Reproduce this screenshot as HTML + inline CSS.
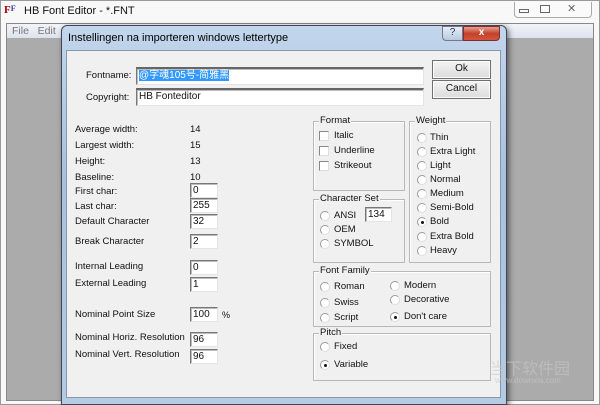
<!DOCTYPE html>
<html><head><meta charset="utf-8"><style>
*{margin:0;padding:0;box-sizing:border-box}
body{width:600px;height:405px;position:relative;overflow:hidden;background:#fff;font-family:"Liberation Sans","Noto Sans CJK SC",sans-serif;font-size:9.5px;color:#111}
.a{position:absolute;white-space:nowrap}
.inp{position:absolute;background:#fff;border-top:1px solid #777;border-left:1px solid #777;border-right:1px solid #e4e4e4;border-bottom:1px solid #e4e4e4;box-shadow:inset 1px 1px 0 #bbb;padding:1px 2px;font-size:10px;line-height:12px}
.grp{position:absolute;border:1px solid #b8b8b8;box-shadow:1px 1px 0 #fff inset}
.grp .t{position:absolute;top:-7px;left:5px;background:#f0f0f0;padding:0 1px}
.rb{position:absolute;width:10px;height:10px;border-radius:50%;background:#fff;border:1px solid #999;border-right-color:#ddd;border-bottom-color:#ddd}
.rb.on::after{content:"";position:absolute;left:2.5px;top:2.5px;width:3px;height:3px;border-radius:50%;background:#111}
.cb{position:absolute;width:10px;height:10px;background:#fff;border:1px solid #888;border-right-color:#ddd;border-bottom-color:#ddd}
.btn{position:absolute;border:1px solid #707070;background:linear-gradient(#f4f4f4,#dcdcdc);box-shadow:inset 0 0 0 1px #fbfbfb;text-align:center;font-size:10px}
</style></head><body>
<div class="a" style="left:0;top:0;width:600px;height:405px;background:#f8f8f8;border:1px solid #999"></div>
<div class="a" style="left:4px;top:4px;font-weight:bold;color:#a00;font-size:11px;font-family:'Liberation Serif',serif">F<span style="font-size:8px;vertical-align:top;color:#33a">F</span></div>
<div class="a" style="left:24px;top:5px;font-size:11px">HB Font Editor - *.FNT</div>
<div class="a" style="left:514px;top:2px;width:78px;height:16px;border:1px solid #aaa;border-top:none;border-radius:0 0 4px 4px;background:#fafafa"></div>
<div class="a" style="left:519px;top:9px;width:10px;height:4px;border:1px solid #666"></div>
<div class="a" style="left:540px;top:5px;width:10px;height:8px;border:1px solid #666"></div>
<div class="a" style="left:567px;top:2px;font-size:11px;color:#666">✕</div>
<div class="a" style="left:6px;top:23px;width:588px;height:378px;background:#ababab;border:1px solid #888"></div>
<div class="a" style="left:7px;top:24px;width:586px;height:14px;background:linear-gradient(#f2f4f8,#dde3ee)"></div>
<div class="a" style="left:12px;top:25px;color:#777;font-size:10.5px">File&nbsp;&nbsp;&nbsp;Edit</div>
<div class="a" style="left:61px;top:25px;width:446px;height:380px;background:linear-gradient(#c2d6ec,#a7c1de 40%,#b4cbe4);border:1px solid #445;border-radius:6px 6px 0 0;box-shadow:2px 2px 6px rgba(0,0,0,.5)"></div>
<div class="a" style="left:68px;top:32px;font-size:11px;color:#000">Instellingen na importeren windows lettertype</div>
<div class="a" style="left:442px;top:26px;width:21px;height:15px;border:1px solid #778;border-radius:0 0 0 4px;background:linear-gradient(#e6eef8,#b7c9de);text-align:center;font-size:10px;color:#334">?</div>
<div class="a" style="left:463px;top:26px;width:37px;height:15px;border:1px solid #733;border-radius:0 0 4px 0;background:linear-gradient(#e8a090,#c4412c 50%,#d2553c);text-align:center;color:#fff;font-weight:bold;font-size:10px">x</div>
<div class="a" style="left:66px;top:50px;width:435px;height:348px;background:#f0f0f0;border:1px solid #8898aa"></div>

<div class="a" style="left:86px;top:70px">Fontname:</div>
<div class="inp" style="left:136px;top:67px;width:288px;height:18px;border-top:2px solid #666"><span style="background:#3399ff;color:#fff">@字魂105号-简雅黑</span></div>
<div class="a" style="left:86px;top:92px">Copyright:</div>
<div class="inp" style="left:136px;top:88px;width:288px;height:18px;border-top:2px solid #666">HB Fonteditor</div>
<div class="btn" style="left:432px;top:60px;width:59px;height:19px;line-height:16px">Ok</div>
<div class="btn" style="left:432px;top:80px;width:59px;height:19px;line-height:16px">Cancel</div>

<div class="a" style="left:75px;top:124px">Average width:</div><div class="a" style="left:190px;top:124px">14</div>
<div class="a" style="left:75px;top:140px">Largest width:</div><div class="a" style="left:190px;top:140px">15</div>
<div class="a" style="left:75px;top:156px">Height:</div><div class="a" style="left:190px;top:156px">13</div>
<div class="a" style="left:75px;top:172px">Baseline:</div><div class="a" style="left:190px;top:172px">10</div>
<div class="a" style="left:75px;top:186px">First char:</div><div class="inp" style="left:190px;top:183px;width:28px;height:15px">0</div>
<div class="a" style="left:75px;top:201px">Last char:</div><div class="inp" style="left:190px;top:198px;width:28px;height:15px">255</div>
<div class="a" style="left:75px;top:216px">Default Character</div><div class="inp" style="left:190px;top:214px;width:28px;height:15px">32</div>
<div class="a" style="left:75px;top:236px">Break Character</div><div class="inp" style="left:190px;top:234px;width:28px;height:15px">2</div>
<div class="a" style="left:75px;top:261px">Internal Leading</div><div class="inp" style="left:190px;top:260px;width:28px;height:15px">0</div>
<div class="a" style="left:75px;top:278px">External Leading</div><div class="inp" style="left:190px;top:277px;width:28px;height:15px">1</div>
<div class="a" style="left:75px;top:309px">Nominal Point Size</div><div class="inp" style="left:190px;top:307px;width:28px;height:15px">100</div><div class="a" style="left:222px;top:310px;font-size:9px">%</div>
<div class="a" style="left:75px;top:332px">Nominal Horiz. Resolution</div><div class="inp" style="left:190px;top:332px;width:28px;height:15px">96</div>
<div class="a" style="left:75px;top:349px">Nominal Vert. Resolution</div><div class="inp" style="left:190px;top:349px;width:28px;height:15px">96</div>

<div class="grp" style="left:313px;top:121px;width:92px;height:70px"><span class="t">Format</span></div>
<div class="cb" style="left:319px;top:131px"></div><div class="a" style="left:334px;top:130px">Italic</div>
<div class="cb" style="left:319px;top:146px"></div><div class="a" style="left:334px;top:145px">Underline</div>
<div class="cb" style="left:319px;top:161px"></div><div class="a" style="left:334px;top:160px">Strikeout</div>

<div class="grp" style="left:313px;top:199px;width:92px;height:64px"><span class="t">Character Set</span></div>
<div class="rb" style="left:320px;top:211px"></div><div class="a" style="left:334px;top:210px">ANSI</div>
<div class="inp" style="left:365px;top:207px;width:27px;height:15px">134</div>
<div class="rb" style="left:320px;top:225px"></div><div class="a" style="left:334px;top:224px">OEM</div>
<div class="rb" style="left:320px;top:239px"></div><div class="a" style="left:334px;top:238px">SYMBOL</div>

<div class="grp" style="left:409px;top:121px;width:82px;height:142px"><span class="t">Weight</span></div>
<div class="rb" style="left:417px;top:133px"></div><div class="a" style="left:430px;top:132px">Thin</div>
<div class="rb" style="left:417px;top:147px"></div><div class="a" style="left:430px;top:146px">Extra Light</div>
<div class="rb" style="left:417px;top:161px"></div><div class="a" style="left:430px;top:160px">Light</div>
<div class="rb" style="left:417px;top:175px"></div><div class="a" style="left:430px;top:174px">Normal</div>
<div class="rb" style="left:417px;top:189px"></div><div class="a" style="left:430px;top:188px">Medium</div>
<div class="rb" style="left:417px;top:203px"></div><div class="a" style="left:430px;top:202px">Semi-Bold</div>
<div class="rb on" style="left:417px;top:217px"></div><div class="a" style="left:430px;top:216px">Bold</div>
<div class="rb" style="left:417px;top:232px"></div><div class="a" style="left:430px;top:231px">Extra Bold</div>
<div class="rb" style="left:417px;top:246px"></div><div class="a" style="left:430px;top:245px">Heavy</div>

<div class="grp" style="left:313px;top:271px;width:178px;height:56px"><span class="t">Font Family</span></div>
<div class="rb" style="left:320px;top:282px"></div><div class="a" style="left:334px;top:281px">Roman</div>
<div class="rb" style="left:320px;top:298px"></div><div class="a" style="left:334px;top:297px">Swiss</div>
<div class="rb" style="left:320px;top:313px"></div><div class="a" style="left:334px;top:312px">Script</div>
<div class="rb" style="left:390px;top:281px"></div><div class="a" style="left:404px;top:280px">Modern</div>
<div class="rb" style="left:390px;top:295px"></div><div class="a" style="left:404px;top:294px">Decorative</div>
<div class="rb on" style="left:390px;top:312px"></div><div class="a" style="left:404px;top:311px">Don't care</div>

<div class="grp" style="left:313px;top:333px;width:178px;height:48px"><span class="t">Pitch</span></div>
<div class="rb" style="left:320px;top:342px"></div><div class="a" style="left:334px;top:341px">Fixed</div>
<div class="rb on" style="left:320px;top:360px"></div><div class="a" style="left:334px;top:359px">Variable</div>

<div class="a" style="left:490px;top:355px;font-size:16px;color:rgba(200,200,200,.6)">当下软件园</div>
<div class="a" style="left:495px;top:376px;font-size:8px;color:rgba(200,200,200,.7)">www.downxia.com</div>
</body></html>
